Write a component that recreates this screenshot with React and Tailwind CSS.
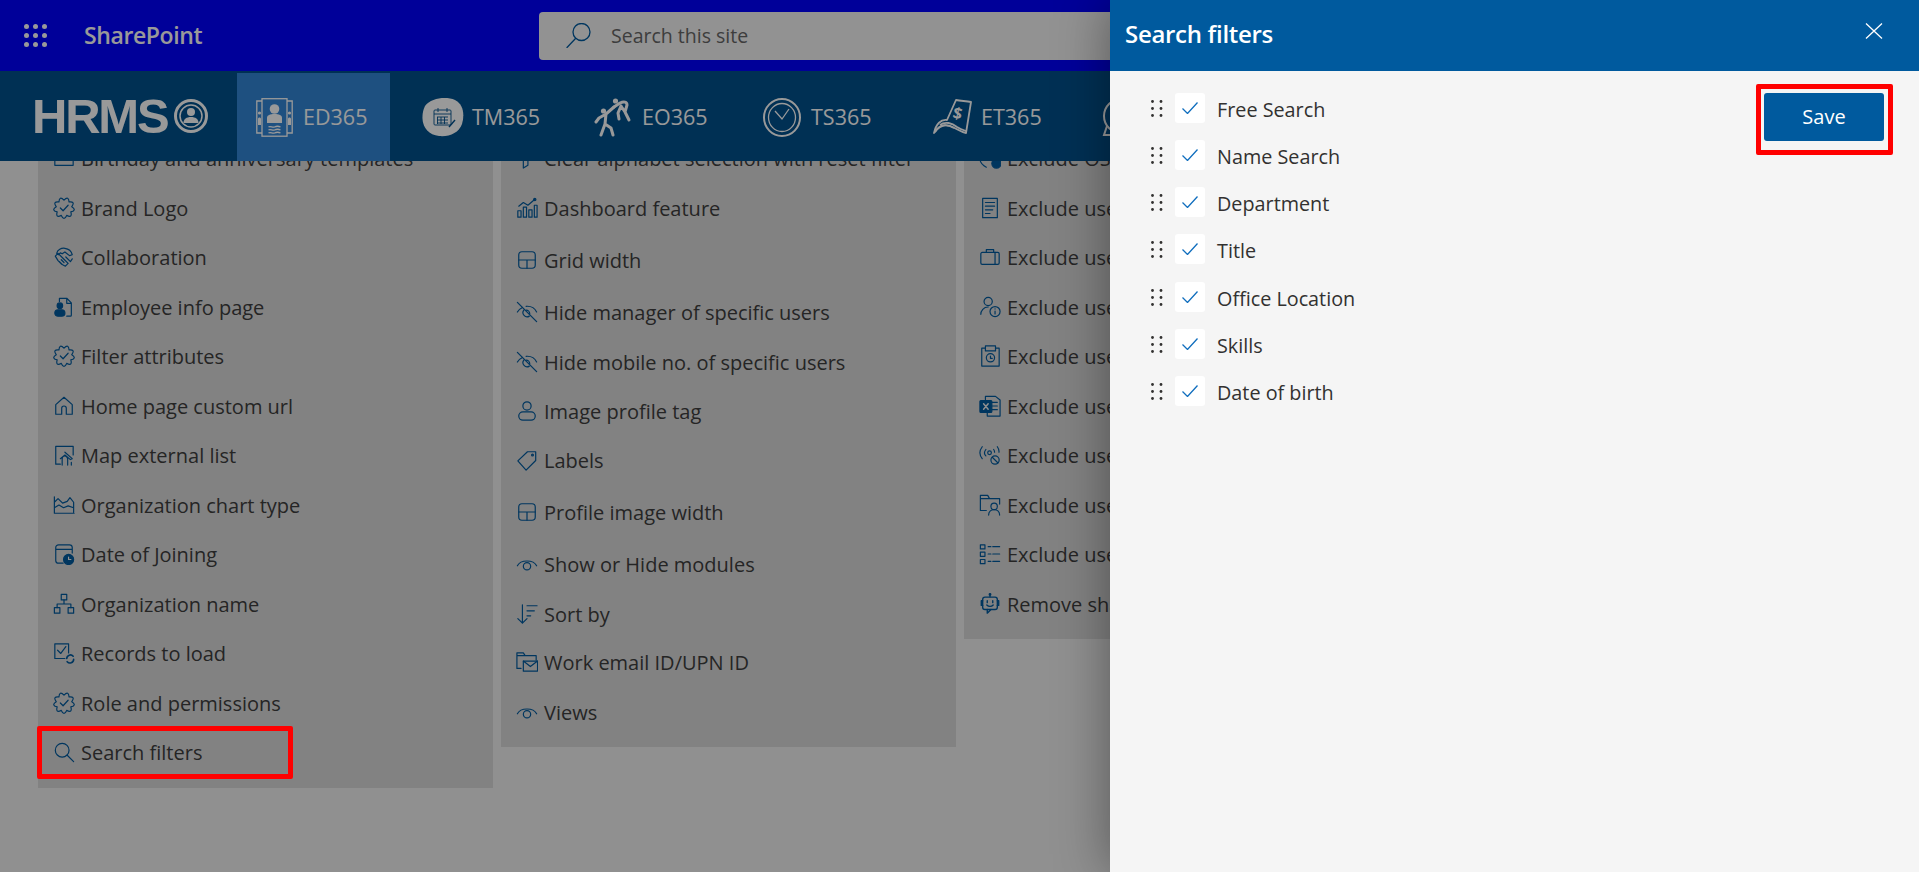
import React from 'react';

const FONT = 'font-["Open_Sans","Noto_Sans",sans-serif]';

// shared 24x24 line icon
const Ico = ({ children, sw = 1.3 }) => (
  <svg viewBox="0 0 24 24" className="w-[22px] h-[22px] text-[#005a9e]" fill="none" stroke="currentColor" strokeWidth={sw} strokeLinecap="round" strokeLinejoin="round">
    {children}
  </svg>
);

// scalloped seal, the lobes are worked out instead of hand written
const sealPath = (() => {
  const lobes = 9;
  let d = '';
  for (let i = 0; i < lobes; i++) {
    const a = (i / lobes) * Math.PI * 2 - Math.PI / 2;
    const b = ((i + 1) / lobes) * Math.PI * 2 - Math.PI / 2;
    const m = (a + b) / 2;
    const r = 8.6;
    const R = 14.6;
    const p = t => `${(12 + r * Math.cos(t)).toFixed(2)} ${(12 + r * Math.sin(t)).toFixed(2)}`;
    const q = `${(12 + R * Math.cos(m)).toFixed(2)} ${(12 + R * Math.sin(m)).toFixed(2)}`;
    d += `${i === 0 ? `M${p(a)}` : ''}Q${q} ${p(b)}`;
  }
  return d + 'z';
})();

const Badge = () => (
  <Ico>
    <path d={sealPath} />
    <path d="M8 12l3 3 5.500-6" />
  </Ico>
);
const Shake = () => (
  <Ico>
    <path d="M4 8c1-4 5-6 9-5.500 4 .5 7 3 8 7l-3 1-5-4-3 2-2-1-2 2z" />
    <path d="M2.500 11l3-3 7 7 4 4-3 3-4-2-4-4zM14 12l5 5 2-3M9 15l3 3M7 17l3 3" />
  </Ico>
);
const EmpInfo = () => (
  <Ico>
    <path d="M7 6V2.500h8l5 5V21a1 1 0 0 1-1 1h-4M15 2.500V8h5" />
    <circle cx="7.500" cy="10.500" r="3" fill="currentColor" />
    <rect x="2" y="15" width="11" height="7" rx="3.500" fill="currentColor" />
  </Ico>
);
const Home = () => (
  <Ico>
    <path d="M12 2.500L3 10.500V21h6.500v-6.500a2.500 2.500 0 0 1 5 0V21H21V10.500z" />
  </Ico>
);
const MapExt = () => (
  <Ico>
    <path d="M3 22V2.500h19V12M3 22h5" />
    <path d="M10 23v-7c0-2 2-3 3-3s3 1.500 3 3.500v6.500M13 9l8 7-2 1-6-5-5 4M20 20v3" />
  </Ico>
);
const Area = () => (
  <Ico>
    <path d="M1.500 3v18h21.500M1.500 9l4-4 5 5 5-2 3-4 4 5v11M1.500 15l5-3 5 3 5-2 6 2" />
  </Ico>
);
const DateClock = () => (
  <Ico>
    <path d="M11 22H6a3 3 0 0 1-3-3V5a3 3 0 0 1 3-3h12a3 3 0 0 1 3 3v6M3 7h18" />
    <circle cx="17" cy="18" r="5.500" fill="currentColor" />
    <path d="M17 15.500V18h2.500" stroke="#f2f2f2" />
  </Ico>
);
const Org = () => (
  <Ico>
    <rect x="9" y="1.500" width="6" height="6" />
    <rect x="1.500" y="16" width="6" height="6" />
    <rect x="16.500" y="16" width="6" height="6" />
    <path d="M12 7.500V12M4.500 16v-4h15v4" />
  </Ico>
);
const Records = () => (
  <Ico>
    <path d="M13 18H2V2h15v10" />
    <path d="M5 9l3.500 3.500L14 5" />
    <path d="M15 18a4 4 0 0 1 7-2.500M22.500 19a4 4 0 0 1-7 2.500" strokeWidth="1.800" />
  </Ico>
);
const Mag = () => (
  <Ico>
    <circle cx="10" cy="10" r="7.500" />
    <path d="M15.500 15.500L22.500 22.500" />
  </Ico>
);
const Bars = () => (
  <Ico>
    <path d="M2 15h3.500v7H2zM8 11h3.500v11H8zM14 14h3.500v8H14zM20 9h3v13h-3z" />
    <path d="M3 10l5-4 5 3 7-6" />
    <circle cx="20.500" cy="2.800" r="1.200" fill="currentColor" />
  </Ico>
);
const Grid = () => (
  <Ico>
    <rect x="3" y="3" width="18" height="18" rx="3.500" />
    <path d="M3 12h18M12 12v9" />
  </Ico>
);
const Eye = () => (
  <Ico>
    <path d="M1.500 14C5 7 19 7 22.500 14" />
    <circle cx="12" cy="14.500" r="4" />
  </Ico>
);
const EyeOff = () => (
  <Ico>
    <path d="M1.500 12C3 9.500 5 8 7 7M11 5.800c5-.4 9.500 2 11.500 6.200" />
    <path d="M8.500 10a4.500 4.500 0 0 0 6 6.500M15 14a4 4 0 0 0-4-4" />
    <path d="M1.500 1.500L22.500 22.500" />
  </Ico>
);
const Profile = () => (
  <Ico>
    <circle cx="12" cy="6.500" r="4.500" />
    <rect x="3" y="13" width="18" height="9" rx="4.500" />
  </Ico>
);
const Tag = () => (
  <Ico>
    <path d="M2 13L12.500 3h9v9.500L11 23z" />
    <circle cx="18" cy="6.500" r="1" />
  </Ico>
);
const Sort = () => (
  <Ico>
    <path d="M7 2v20M2 17l5 5 5-5M12 3h11M12 8.500h8M12 14h4" />
  </Ico>
);
const WorkMail = () => (
  <Ico>
    <path d="M5.500 19H1V2h7l2 3h12v5M1 5h9" />
    <rect x="8" y="11" width="15.500" height="11" />
    <path d="M8 11l7.700 6 7.800-6" />
  </Ico>
);
const DocList = () => (
  <Ico>
    <rect x="4" y="1.500" width="16" height="21" />
    <path d="M7 6h10M7 10h10M7 14h8M7 18h5" />
  </Ico>
);
const Brief = () => (
  <Ico>
    <rect x="2" y="7" width="20" height="13" rx="1.500" />
    <path d="M8 7V4h8v3M17.500 7v13" />
  </Ico>
);
const UserInfo = () => (
  <Ico>
    <circle cx="10" cy="6" r="4.500" />
    <path d="M2 20c0-4 3-8 8-8" />
    <circle cx="17.500" cy="17" r="5.500" />
    <path d="M17.500 16.500v3M17.500 14v.2" />
  </Ico>
);
const SaveClock = () => (
  <Ico>
    <path d="M7 3.500H3V23h19V3.500h-4" />
    <rect x="7" y="1" width="11" height="5.500" />
    <circle cx="12.500" cy="14" r="4.500" />
    <path d="M12.500 12v2.500h2" />
  </Ico>
);
const Excel = () => (
  <Ico>
    <path d="M7 5V1.500h11l5 4V23H9v-4M14 8h6M14 12h6M14 16h6" />
    <rect x="1" y="6" width="13" height="13" rx="1" fill="currentColor" />
    <path d="M5 9.500l5 6M10 9.500l-5 6" stroke="#f2f2f2" strokeWidth="1.600" />
  </Ico>
);
const Signal = () => (
  <Ico>
    <path d="M3.500 3C.5 7-.5 11 3.500 16M7.500 6c-2 2.500-2 5 0 7M20 3c1.500 2 2 4 1.800 6M16 6c.8 1 1 2 1 3" />
    <circle cx="11.500" cy="9.500" r="2" />
    <circle cx="17.500" cy="17.500" r="4.500" />
    <path d="M14.500 14.500l6 6" />
  </Ico>
);
const FolderUser = () => (
  <Ico>
    <path d="M8 18H1.500V1.500h8l2 3.500h11v6M1.500 5h10" />
    <circle cx="16.500" cy="13.500" r="3.500" />
    <path d="M10.500 23c0-4 3-6 6-6s6 2 6 6" />
  </Ico>
);
const ListBox = () => (
  <Ico>
    <rect x="1.500" y="2" width="5" height="4.500" />
    <rect x="1.500" y="10" width="5" height="4.500" />
    <rect x="1.500" y="18" width="5" height="4.500" />
    <path d="M10 4h3M15 4h7.500M10 12h3M15 12h7.500M10 20h3M15 20h7.500" />
  </Ico>
);
const Bot = () => (
  <Ico sw={1.500}>
    <path d="M12 1.500V4" />
    <circle cx="12" cy="1.500" r=".8" fill="currentColor" />
    <rect x="4" y="4.500" width="16" height="13.500" rx="2.500" />
    <path d="M4 8.500H2.500v5H4M20 8.500h1.500v5H20M9 18v4l4-4" />
    <path d="M9 8.500v2M15 8.500v2M8.500 13c2 2 5 2 7 0" />
  </Ico>
);
// these three are cut by the nav, only their lower part shows
const ExOs = () => (
  <Ico>
    <path d="M1 14c1 4 3 6 7 8" />
    <circle cx="19" cy="18" r="5" fill="currentColor" />
  </Ico>
);
const Birthday = () => (
  <Ico>
    <path d="M2 14v6h20v-6" />
  </Ico>
);
const Funnel = () => (
  <Ico>
    <path d="M8 14v9l5-3v-6" />
  </Ico>
);

// row tops are taken from the reference, the columns don't share one pitch
const col1 = [
  [Birthday, 'Birthday and anniversary templates'],
  [Badge, 'Brand Logo'],
  [Shake, 'Collaboration'],
  [EmpInfo, 'Employee info page'],
  [Badge, 'Filter attributes'],
  [Home, 'Home page custom url'],
  [MapExt, 'Map external list'],
  [Area, 'Organization chart type'],
  [DateClock, 'Date of Joining'],
  [Org, 'Organization name'],
  [Records, 'Records to load'],
  [Badge, 'Role and permissions'],
  [Mag, 'Search filters'],
];

const col2 = [
  [Funnel, 'Clear alphabet selection with reset filter', 'h-[50px]'],
  [Bars, 'Dashboard feature', 'h-[52px]'],
  [Grid, 'Grid width', 'h-[52px]'],
  [EyeOff, 'Hide manager of specific users', 'h-[50px]'],
  [EyeOff, 'Hide mobile no. of specific users', 'h-[49px]'],
  [Profile, 'Image profile tag', 'h-[49px]'],
  [Tag, 'Labels', 'h-[52px]'],
  [Grid, 'Profile image width', 'h-[52px]'],
  [Eye, 'Show or Hide modules', 'h-[50px]'],
  [Sort, 'Sort by', 'h-[48px]'],
  [WorkMail, 'Work email ID/UPN ID', 'h-[50px]'],
  [Eye, 'Views', 'h-[49px]'],
];

// the panel covers the rest of these labels
const col3 = [
  [ExOs, 'Exclude OS'],
  [DocList, 'Exclude users'],
  [Brief, 'Exclude users'],
  [UserInfo, 'Exclude users'],
  [SaveClock, 'Exclude users'],
  [Excel, 'Exclude users'],
  [Signal, 'Exclude users'],
  [FolderUser, 'Exclude users'],
  [ListBox, 'Exclude users'],
  [Bot, 'Remove share'],
];

const Column = ({ rows, h = 'h-[49.5px]' }) => (
  <div className="w-[455px] bg-[#d9d9d9] pt-[13px] shrink-0">
    {rows.map(([Icon, label, rowH], i) => (
      <div key={i} className={`flex items-start pl-[15px] ${rowH || h}`}>
        <div className="w-[22px] h-[30px] mr-[6px] flex items-center justify-center shrink-0 -translate-y-[1px]">
          <Icon />
        </div>
        <span className="text-[20px] leading-[30px] text-[#3e3e3e] whitespace-nowrap">{label}</span>
      </div>
    ))}
  </div>
);

const EdIcon = () => (
  <svg viewBox="0 0 37 39" className="w-[37px] h-[39px]" fill="none" stroke="currentColor" strokeWidth="1.300">
    <rect x="6" y=".7" width="25" height="37.500" />
    <path d="M6 3H.8v32H6M31 3h5.200v32H31" />
    <circle cx="18.500" cy="11" r="4.800" fill="currentColor" stroke="none" />
    <path d="M11 25v-5c0-3 3-4 7.500-4s7.500 1 7.500 4v5z" fill="currentColor" stroke="none" />
    <path d="M12.500 29c2-1.500 4 1 6 0s4-1 6 0M12.500 32c2-1.500 4 1 6 0s4-1 6 0M12.500 35c2-1.500 4 1 6 0s4-1 6 0" />
    <circle cx="3.500" cy="15" r="1.600" fill="currentColor" stroke="none" />
    <circle cx="33.500" cy="15" r="1.600" fill="currentColor" stroke="none" />
    <path d="M2 27v-6c0-2 3-2 3 0v6zM32 27v-6c0-2 3-2 3 0v6z" fill="currentColor" stroke="none" />
  </svg>
);

const TmIcon = () => (
  <svg viewBox="0 0 42 39" className="w-[42px] h-[39px]" fill="none">
    <path d="M3 8C9 0 24-2 33 2c8 4 10 14 7 24-3 9-13 13-23 12C7 37 1 30 .5 21 .3 16 1 12 3 8z" fill="currentColor" />
    <g stroke="#00508d" strokeWidth=".9">
      <rect x="12" y="12" width="17" height="15" rx="1" />
      <path d="M12 16h17M15 19h11M15 22h11M15 25h11M15.500 19v7M19 19v7M22.500 19v7M16 10v4M25 10v4" />
      <path d="M27 29l6-7" strokeWidth="1.400" />
    </g>
  </svg>
);

const EoIcon = () => (
  <svg viewBox="0 0 38 39" className="w-[38px] h-[39px]" fill="none" stroke="currentColor" strokeWidth="3" strokeLinecap="round" strokeLinejoin="round">
    <circle cx="9.500" cy="13" r="2.600" fill="currentColor" stroke="none" />
    <circle cx="21.500" cy="3" r="2.600" fill="currentColor" stroke="none" />
    <path d="M20 9l-8 7-7 4M12 16l-1 10-4 11M11 26l6 4 2 7M5 20l-3 4" />
    <path d="M20 9l6-4c4-2 7-1 7 2l-2 7-4-6M31 14l4 8M27 8l-3 7 1 6" />
  </svg>
);

const TsIcon = () => (
  <svg viewBox="0 0 38 39" className="w-[38px] h-[39px]" fill="none" stroke="currentColor">
    <ellipse cx="19" cy="19.500" rx="18" ry="18.500" strokeWidth="2" />
    <ellipse cx="19" cy="19.500" rx="13.500" ry="14" strokeWidth="1.300" />
    <path d="M12 13l7 8 7-10" strokeWidth="1.300" />
  </svg>
);

const EtIcon = () => (
  <svg viewBox="0 0 39 39" className="w-[39px] h-[39px]" fill="none" stroke="currentColor" strokeWidth="1.800" strokeLinejoin="round">
    <path d="M14 22L23 2c5 1 10 1 15 2l-5 31c-6-1-10-5-16-7-6-2-11 0-16 7 2-9 7-14 13-13z" />
    <path d="M7 27c5-4 12-2 17 2 3 2 6 3 9 4" />
    <path d="M2 34c5-9 13-8 19-4" />
    <text x="20" y="21" fontSize="16" fontWeight="700" fill="currentColor" stroke="none" fontFamily="Open Sans" transform="rotate(12 24 16)">$</text>
  </svg>
);

const NextIcon = () => (
  <svg viewBox="0 0 39 39" className="w-[39px] h-[39px]" fill="none" stroke="currentColor" strokeWidth="2">
    <circle cx="20" cy="18" r="17" />
    <path d="M6 28L3 37h6" />
  </svg>
);

const navItems = [
  [TmIcon, 'TM365', 'ml-[32px] gap-[8px]', 'w-[68px]'],
  [EoIcon, 'EO365', 'ml-[54px] gap-[10px]', 'w-[64px]'],
  [TsIcon, 'TS365', 'ml-[57px] gap-[10px]', 'w-[59px]'],
  [EtIcon, 'ET365', 'ml-[63px] gap-[9px]', 'w-[59px]'],
];

const filters = [
  ['Free Search', 'h-[47px]'],
  ['Name Search', 'h-[47px]'],
  ['Department', 'h-[47px]'],
  ['Title', 'h-[48px]'],
  ['Office Location', 'h-[47px]'],
  ['Skills', 'h-[47px]'],
  ['Date of birth', 'h-[47px]'],
];

const Dots = () => (
  <svg viewBox="0 0 12 17" className="w-[12px] h-[17px] text-[#323130]" fill="currentColor">
    <circle cx="1.500" cy="1.500" r="1.400" />
    <circle cx="10" cy="1.500" r="1.400" />
    <circle cx="1.500" cy="8.500" r="1.400" />
    <circle cx="10" cy="8.500" r="1.400" />
    <circle cx="1.500" cy="15.500" r="1.400" />
    <circle cx="10" cy="15.500" r="1.400" />
  </svg>
);

export default function App() {
  return (
    <div className={`relative h-screen overflow-hidden bg-[#f0f0f0] ${FONT}`}>
      {/* suite bar */}
      <div className="h-[71px] bg-[#0000ff] flex items-center">
        <svg viewBox="0 0 23 23" className="w-[23px] h-[23px] ml-[24px] text-white" fill="currentColor">
          {[2.500, 11.500, 20.500].map(y =>
            [2.500, 11.500, 20.500].map(x => <circle key={`${x}-${y}`} cx={x} cy={y} r="2.500" />)
          )}
        </svg>
        <span className="ml-[37px] w-[117px] text-[23px] font-semibold text-white tracking-[-0.4px]">SharePoint</span>
        <div className="ml-[338px] w-[600px] h-[48px] bg-[#f4f4f4] rounded-[4px] flex items-center shrink-0">
          <svg viewBox="0 0 25 25" className="ml-[27px] w-[25px] h-[25px] text-[#005a9e]" fill="none" stroke="currentColor" strokeWidth="1.300" strokeLinecap="round">
            <circle cx="15.500" cy="9" r="8.500" />
            <path d="M9.500 15.500L1 24.500" />
          </svg>
          <span className="ml-[20px] text-[19.500px] text-[#666]">Search this site</span>
        </div>
      </div>

      {/* app nav */}
      <div className="relative z-[1] h-[90px] bg-[#00508d] flex items-end">
        <div className="w-[237px] h-[90px] flex items-center pl-[32px] text-white shrink-0">
          <span className="w-[142px] text-[49px] leading-none font-bold font-['Liberation_Sans'] tracking-[-2.200px]">HRMS</span>
          <svg viewBox="0 0 34 34" className="w-[34px] h-[34px]" fill="none" stroke="currentColor">
            <circle cx="17" cy="17" r="15.500" strokeWidth="3" />
            <circle cx="17" cy="17" r="11" strokeWidth="1.500" />
            <circle cx="17" cy="13" r="4" fill="currentColor" stroke="none" />
            <path d="M9.500 24c0-4 3-6 7.500-6s7.500 2 7.500 6z" fill="currentColor" stroke="none" />
          </svg>
        </div>
        <div className="w-[153px] h-[88px] pl-[19px] gap-[10px] bg-[#3385d6] flex items-center text-white shrink-0">
          <EdIcon />
          <span className="text-[21.500px]">ED365</span>
        </div>
        {navItems.map(([Icon, label, cls, tw]) => (
          <div key={label} className={`h-[88px] flex items-center text-white shrink-0 ${cls}`}>
            <Icon />
            <span className={`text-[21.500px] ${tw}`}>{label}</span>
          </div>
        ))}
        {/* next module, its label is under the panel */}
        <div className="h-[88px] ml-[61px] flex items-center text-white shrink-0">
          <NextIcon />
        </div>
      </div>

      {/* settings columns, the page is scrolled so the first row sits under the nav */}
      <div className="-mt-[30px] pl-[38px] flex items-start gap-[8px]">
        <Column rows={col1} />
        <Column rows={col2} />
        <Column rows={col3} />
      </div>

      {/* dim layer */}
      <div className="absolute inset-0 z-10 bg-[rgba(0,0,0,0.4)]" />

      {/* filter panel */}
      <div className="absolute top-0 right-0 bottom-0 z-20 w-[809px] bg-[#f5f5f5] shadow-[0_0_50px_rgba(0,0,0,0.4)]">
        <div className="h-[71px] bg-[#005a9e] flex items-start justify-between pl-[15px] pr-[36px]">
          <span className="mt-[16px] text-[24px] leading-[36px] font-semibold text-white tracking-[-0.3px]">Search filters</span>
          <svg viewBox="0 0 18 16" className="mt-[23px] w-[18px] h-[16px] text-white" fill="none" stroke="currentColor" strokeWidth="1.300">
            <path d="M1 .5l16 15M17 .5l-16 15" />
          </svg>
        </div>
        <div className="flex justify-between pl-[41px] pr-[35px] pt-[22px]">
          <div>
            {filters.map(([label, h]) => (
              <div key={label} className={`flex items-start ${h}`}>
                <div className="w-[12px] h-[30px] flex items-center">
                  <Dots />
                </div>
                <div className="ml-[12px] w-[30px] h-[30px] bg-white rounded-[3px] flex items-center justify-center">
                  <svg viewBox="0 0 16 12" className="w-[16px] h-[12px] text-[#106ebe]" fill="none" stroke="currentColor" strokeWidth="1.300">
                    <path d="M.5 6.500L5.500 11.500 15.500 .5" />
                  </svg>
                </div>
                <span className="ml-[12px] text-[19.800px] leading-[34px] text-[#323130]">{label}</span>
              </div>
            ))}
          </div>
          <div className="relative h-[48px]">
            <button className="w-[120px] h-[48px] bg-[#005a9e] rounded-[3px] text-white text-[20px] font-medium">Save</button>
            <div className="absolute -top-[9px] -left-[8px] -right-[9px] h-[71px] border-[5px] border-[#ff0000] rounded-[2px]" />
          </div>
        </div>
      </div>

      {/* annotation round the menu item */}
      <div className="absolute z-30 left-[37px] top-[726px] w-[256px] h-[53px] border-[5px] border-[#ff0000] rounded-[2px]" />
    </div>
  );
}
